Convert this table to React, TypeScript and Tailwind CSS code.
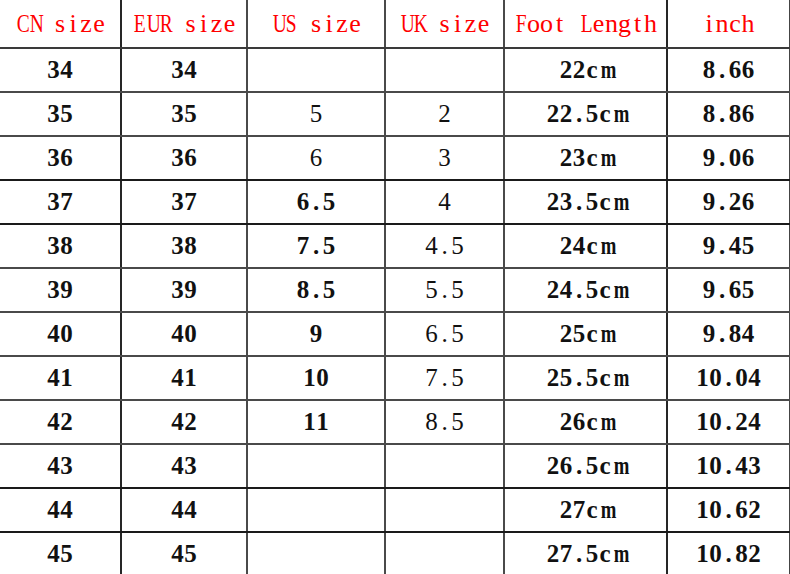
const HEADERS = ["CN size", "EUR size", "US size", "UK size", "Foot Length", "inch"];

const ROWS = [
  ["34", "34", "", "", "22cm", "8.66"],
  ["35", "35", "5", "2", "22.5cm", "8.86"],
  ["36", "36", "6", "3", "23cm", "9.06"],
  ["37", "37", "6.5", "4", "23.5cm", "9.26"],
  ["38", "38", "7.5", "4.5", "24cm", "9.45"],
  ["39", "39", "8.5", "5.5", "24.5cm", "9.65"],
  ["40", "40", "9", "6.5", "25cm", "9.84"],
  ["41", "41", "10", "7.5", "25.5cm", "10.04"],
  ["42", "42", "11", "8.5", "26cm", "10.24"],
  ["43", "43", "", "", "26.5cm", "10.43"],
  ["44", "44", "", "", "27cm", "10.62"],
  ["45", "45", "", "", "27.5cm", "10.82"],
];

// rows whose bottom rule is drawn heavier in the original
const THICK = [2, 3, 9, 10];

const COL_BORDER = [
  "border-r-2 border-r-[#262626]",
  "border-r-2 border-r-[#4a4a4a]",
  "border-r-2 border-r-[#4a4a4a]",
  "border-r-2 border-r-[#4a4a4a]",
  "border-r-2 border-r-[#262626]",
  "border-r border-r-[#444]",
];

// fake a half-width monospace face: every glyph gets the same cell
function Mono({ text }: { text: string }) {
  return (
    <span className="inline-flex">
      {text.split("").map((c, i) => (
        <span
          key={i}
          className={
            /[A-Zm]/.test(c)
              ? "inline-block w-[13px] text-center scale-x-75"
              : "inline-block w-[13px] text-center"
          }
        >
          {c === " " ? "\u00a0" : c}
        </span>
      ))}
    </span>
  );
}

function cellWeight(col: number, value: string) {
  if (col === 3) return "font-normal";
  if (col === 2 && (value === "5" || value === "6")) return "font-normal";
  return "font-bold";
}

export default function App() {
  return (
    <div className="w-[790px] h-[574px] overflow-hidden bg-white [font-family:'Liberation_Serif','Times_New_Roman',serif]">
      <div className="grid h-[49px] grid-cols-[122px_126px_138px_119px_163px_122px] border-b-2 border-b-[#3a3a3a] text-[26px]">
        {HEADERS.map((h, i) => (
          <div key={h} className={`flex items-center justify-center pb-px text-[#ff0000] ${COL_BORDER[i]}`}>
            <Mono text={h} />
          </div>
        ))}
      </div>
      {ROWS.map((row, r) => (
        <div
          key={row[0]}
          className={`grid h-[44px] grid-cols-[122px_126px_138px_119px_163px_122px] border-b-2 text-[25px] ${
            THICK.includes(r) ? "border-b-[#1a1a1a]" : "border-b-[#4a4a4a]"
          }`}
        >
          {row.map((v, c) => (
            <div
              key={c}
              className={`flex items-center justify-center text-[#111] ${COL_BORDER[c]} ${cellWeight(c, v)}`}
            >
              <Mono text={v} />
            </div>
          ))}
        </div>
      ))}
    </div>
  );
}
